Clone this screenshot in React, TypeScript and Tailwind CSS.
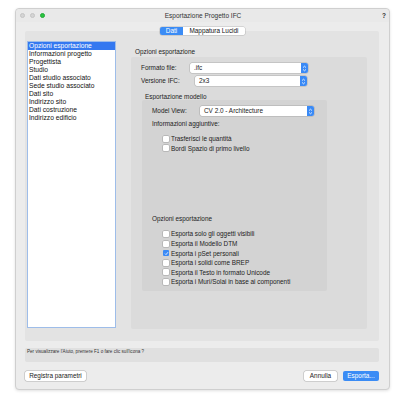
import React from "react";

const font = { fontFamily: '"Liberation Sans", Arial, sans-serif' };

function Stepper() {
  return (
    <div className="w-[7px] h-full bg-[#3a8af6] rounded-r-[2px] flex items-center justify-center">
      <svg width="5" height="7" viewBox="0 0 5 7">
        <path d="M1 2.6 L2.5 1.2 L4 2.6" stroke="white" strokeWidth="0.8" fill="none" />
        <path d="M1 4.4 L2.5 5.8 L4 4.4" stroke="white" strokeWidth="0.8" fill="none" />
      </svg>
    </div>
  );
}

function Select({ value, w }: { value: string; w: string }) {
  return (
    <div className={`${w} h-[10px] bg-white rounded-[2px] shadow-[0_0_0_0.5px_rgba(0,0,0,0.2)] flex items-center`}>
      <span className="flex-1 pl-[4px] text-[6.4px] leading-[10px] text-[#222]">{value}</span>
      <Stepper />
    </div>
  );
}

function Check({ label, checked }: { label: string; checked?: boolean }) {
  return (
    <div className="h-[9.6px] flex items-center pl-[21px]">
      {checked ? (
        <div className="w-[6px] h-[6px] rounded-[1px] bg-[#3a8af6] flex items-center justify-center">
          <svg width="5" height="5" viewBox="0 0 5 5">
            <path d="M1 2.6 L2 3.6 L4 1.2" stroke="white" strokeWidth="0.8" fill="none" />
          </svg>
        </div>
      ) : (
        <div className="w-[6px] h-[6px] rounded-[1px] bg-white shadow-[0_0_0_0.5px_rgba(0,0,0,0.25)]" />
      )}
      <span className="ml-[2px] text-[6.4px] leading-[9px] text-[#222]">{label}</span>
    </div>
  );
}

const listItems = [
  "Opzioni esportazione",
  "Informazioni progetto",
  "Progettista",
  "Studio",
  "Dati studio associato",
  "Sede studio associato",
  "Dati sito",
  "Indirizzo sito",
  "Dati costruzione",
  "Indirizzo edificio",
];

export default function App() {
  return (
    <div className="w-[403px] h-[400px] bg-white pt-[8px] pl-[15px]" style={font}>
      <div className="w-[375px] h-[382px] bg-[#ececec] rounded-[4px] border border-[#cfcfcf] shadow-[0_1px_3px_rgba(0,0,0,0.12)] flex flex-col">
        {/* title bar */}
        <div className="h-[13px] flex items-center bg-[#e9e9e9] rounded-t-[4px]">
          <div className="flex-1 flex items-center gap-[5px] pl-[4px]">
            <div className="w-[5px] h-[5px] rounded-full bg-[#d4d4d4] border border-[#c4c4c4]" />
            <div className="w-[5px] h-[5px] rounded-full bg-[#d4d4d4] border border-[#c4c4c4]" />
            <div className="w-[5px] h-[5px] rounded-full bg-[#29c53f] border border-[#22a836]" />
          </div>
          <div className="text-[6.5px] leading-[8px] text-[#333]">Esportazione Progetto IFC</div>
          <div className="flex-1 flex justify-end pr-[3px] text-[6.5px] font-bold leading-[8px] text-[#333]">?</div>
        </div>

        {/* tabs */}
        <div className="mt-[5px] h-[8px] flex justify-center relative z-10">
          <div className="flex rounded-[2px] shadow-[0_0_0_0.5px_rgba(0,0,0,0.2)] overflow-hidden">
            <div className="w-[23px] bg-[#3b8cf5] text-white text-[6.4px] leading-[8px] text-center">Dati</div>
            <div className="w-[62px] bg-white text-[#111] text-[6.4px] leading-[8px] text-center">Mappatura Lucidi</div>
          </div>
        </div>

        {/* tab panel */}
        <div className="-mt-[4px] ml-[9px] w-[354px] h-[310px] bg-[#e3e3e3] rounded-[2px] flex pl-[2px] pt-[10px]">
          <div className="w-[89px] h-[287px] bg-white border border-[#9ebde9] pt-[0px]">
            {listItems.map((t, i) => (
              <div
                key={t}
                className={`h-[8px] pl-[1px] text-[6.7px] leading-[8px] ${i === 0 ? "bg-[#3478f0] text-white" : "text-[#111]"}`}
              >
                {t}
              </div>
            ))}
          </div>

          <div className="ml-[15px] pt-[7px] flex flex-col">
            <div className="pl-[4px] h-[8px] text-[6.4px] leading-[8px] text-[#222]">Opzioni esportazione</div>
            <div className="mt-[1px] w-[236px] h-[272px] bg-[#dbdbdb] rounded-[2px] flex flex-col pt-[6px]">
              <div className="flex items-center h-[10px]">
                <span className="ml-[10px] w-[49px] text-[6.4px] text-[#222]">Formato file:</span>
                <Select value=".ifc" w="w-[118px]" />
              </div>
              <div className="mt-[3px] flex items-center h-[10px]">
                <span className="ml-[10px] w-[54px] text-[6.4px] text-[#222]">Versione IFC:</span>
                <Select value="2x3" w="w-[112px]" />
              </div>
              <div className="mt-[7px] ml-[14px] h-[7px] text-[6.4px] leading-[7px] text-[#222]">Esportazione modello</div>
              <div className="ml-[11px] w-[185px] h-[191px] bg-[#d3d3d3] rounded-[2px] flex flex-col pt-[6px]">
                <div className="flex items-center h-[10px]">
                  <span className="ml-[10px] w-[48px] text-[6.4px] text-[#222]">Model View:</span>
                  <Select value="CV 2.0 - Architecture" w="w-[114px]" />
                </div>
                <div className="mt-[4px] ml-[10px] h-[8px] text-[6.4px] leading-[8px] text-[#222]">Informazioni aggiuntive:</div>
                <div className="mt-[6px]">
                  <Check label="Trasferisci le quantità" />
                  <Check label="Bordi Spazio di primo livello" />
                </div>
                <div className="mt-[62px] ml-[10px] h-[8px] text-[6.4px] leading-[8px] text-[#222]">Opzioni esportazione</div>
                <div className="mt-[6px]">
                  <Check label="Esporta solo gli oggetti visibili" />
                  <Check label="Esporta il Modello DTM" />
                  <Check label="Esporta i pSet personali" checked />
                  <Check label="Esporta i solidi come BREP" />
                  <Check label="Esporta il Testo in formato Unicode" />
                  <Check label="Esporta i Muri/Solai in base ai componenti" />
                </div>
              </div>
            </div>
          </div>
        </div>

        {/* help bar */}
        <div className="mt-[7px] ml-[9px] w-[354px] h-[14px] bg-[#e0e0e0] rounded-[2px] pl-[2px] pt-[1px]">
          <div className="text-[4.6px] leading-[6px] text-[#333]">Per visualizzare l'Aiuto, premere F1 o fare clic sull'icona ?</div>
        </div>

        {/* buttons */}
        <div className="mt-[9px] ml-[9px] w-[354px] h-[10px] flex items-center">
          <div className="w-[61px] h-[10px] bg-white rounded-[2px] shadow-[0_0_0_0.5px_rgba(0,0,0,0.25)] text-[6.4px] leading-[10px] text-center text-[#222]">Registra parametri</div>
          <div className="flex-1" />
          <div className="w-[33px] h-[10px] bg-white rounded-[2px] shadow-[0_0_0_0.5px_rgba(0,0,0,0.25)] text-[6.4px] leading-[10px] text-center text-[#222]">Annulla</div>
          <div className="ml-[6px] w-[36px] h-[10px] bg-[#3b8cf5] rounded-[2px] text-[6.4px] leading-[10px] text-center text-white">Esporta...</div>
        </div>
      </div>
    </div>
  );
}
